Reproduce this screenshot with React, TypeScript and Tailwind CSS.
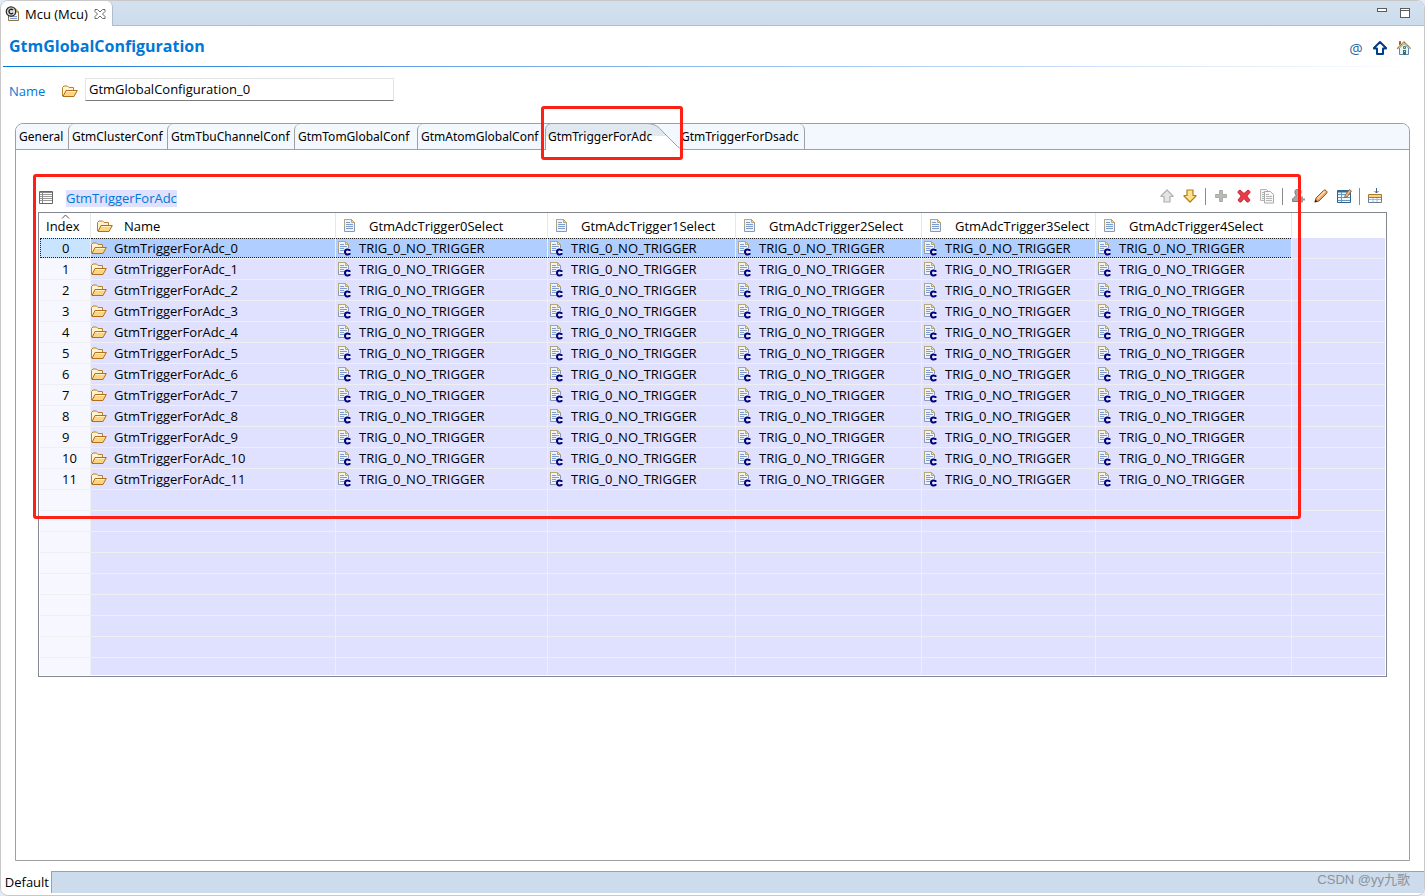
import clsx from 'clsx'
import { ReactNode } from 'react'

interface ITab {
   label: string
   width: string
}

const tabs: ITab[] = [
   { label: 'General', width: 'w-[52px]' },
   { label: 'GtmClusterConf', width: 'w-[99px]' },
   { label: 'GtmTbuChannelConf', width: 'w-[127px]' },
   { label: 'GtmTomGlobalConf', width: 'w-[123px]' },
   { label: 'GtmAtomGlobalConf', width: 'w-[128px]' },
   { label: 'GtmTriggerForAdc', width: 'w-[131px]' },
   { label: 'GtmTriggerForDsadc', width: 'w-[129px]' },
]

const activeTab = 'GtmTriggerForAdc'
const selects = [0, 1, 2, 3, 4].map((n) => `GtmAdcTrigger${n}Select`)
const rows = Array.from({ length: 12 }, (_, i) => `GtmTriggerForAdc_${i}`)
const emptyRows = Array.from({ length: 9 }, (_, i) => i)

const FolderIcon = () => (
   <svg width="16" height="14" viewBox="0 0 16 14" className="shrink-0" aria-hidden="true">
      <path d="M.5 12V3.500L2 2H5.500L7 3.500H11.500V6" fill="#fff3cf" stroke="#b9802f" />
      <path d="M1 12.500 4 6.500H15.300L12 12.500Z" fill="#fbd583" stroke="#b06f1f" strokeLinejoin="round" />
      <path d="M4.600 7.500H13.500" stroke="#fff1c4" />
   </svg>
)

const DocIcon = ({ config = false }: { config?: boolean }) => (
   <svg width="16" height="16" viewBox="-1 0 16 16" className="shrink-0" aria-hidden="true">
      <path d="M1.500 1.500H8.500L11.500 4.500V13.500H1.500Z" fill="#eef4fd" stroke="#8d97ad" />
      <path d="M1.500 9V1.500H8.500L11.500 4.500" fill="none" stroke="#b7a774" />
      <path d="M8.500 1.500V4.500H11.500Z" fill="#f2dc9c" stroke="#b7a774" />
      <path d="M3 4.500H7M3 6.500H10M3 8.500H10M3 10.500H10" stroke="#7f9dcc" />
      {config && (
         <>
            <path d="M7 8h6v7H7z" fill="#e4eafb" />
            <path
               d="M12.500 11V10C11.500 9.400 8 8.800 8 12s3.500 2.800 4.500 2V13"
               fill="none"
               stroke="#00007e"
               strokeWidth="2"
            />
         </>
      )}
   </svg>
)

const ModuleIcon = () => (
   <svg width="16" height="16" viewBox="0 0 16 16" className="shrink-0" aria-hidden="true">
      <path d="M3.500 2.500H10L13.500 6V14.500H3.500Z" fill="#f0f5ff" stroke="#8a7546" />
      <path d="M10 2.500V6H13.500Z" fill="#f0d690" stroke="#b39048" />
      <path d="M5 10.500H12M5 12.500H12" stroke="#7c9bd0" />
      <circle cx="6" cy="5.500" r="4.700" fill="#ddd" stroke="#2d2d2d" strokeWidth="1.300" />
      <path d="M8 4C6.500 2.600 4 3.300 4 5.500S6.500 8.400 8 7" fill="none" stroke="#222" strokeWidth="1.500" />
   </svg>
)

const CloseIcon = () => (
   <svg width="12" height="12" viewBox="0 0 12 12" aria-hidden="true">
      <path
         d="M1 1.500H3.500L6 4 8.500 1.500H11V3.500L8.500 6 11 8.500V10.500H8.500L6 8 3.500 10.500H1V8.500L3.500 6 1 3.500Z"
         fill="#fff"
         stroke="#6b6b6b"
      />
   </svg>
)

const HomeIcon = () => (
   <svg width="16" height="16" viewBox="0 0 16 16" aria-hidden="true">
      <path d="M3.500 1.500H4.500V5H3.500Z" fill="#c9584a" stroke="#a8543c" />
      <path d="M3.500 8 8 3.500 12.500 8V14.500H3.500Z" fill="#e9f2fb" stroke="#5f86b2" />
      <path d="M1.500 8.500 8 2 14.500 8.500" fill="none" stroke="#d9bd8b" strokeWidth="2" />
      <path d="M1 9 8 2 15 9" fill="none" stroke="#6e5a3d" strokeDasharray="1 1" />
      <path d="M7.500 6.500h2v2h-2z" fill="#e7e34b" stroke="#3b8b58" />
      <path d="M7 10h3v5H7z" fill="#2f7a62" />
      <path d="M8 11h1v1H8z" fill="#e7e34b" />
   </svg>
)

interface IArrow {
   down?: boolean
   fill: string
   stroke: string
   weight?: number
}

const ArrowIcon = ({ down = false, fill, stroke, weight = 1.2 }: IArrow) => (
   <svg width="16" height="16" viewBox="0 0 16 16" className={clsx(down && 'rotate-180')} aria-hidden="true">
      <path
         d="M8 2 14 8V8.500H11V14H5V8.500H2V8Z"
         fill={fill}
         stroke={stroke}
         strokeWidth={weight}
         strokeLinejoin="round"
      />
   </svg>
)

const PlusIcon = () => (
   <svg width="16" height="16" viewBox="0 0 16 16" aria-hidden="true">
      <path d="M6.500 2.500h3v4h4v3h-4v4h-3v-4h-4v-3h4Z" fill="#b9bbb6" stroke="#a9aca6" />
   </svg>
)

const DeleteIcon = () => (
   <svg width="16" height="16" viewBox="0 0 16 16" aria-hidden="true">
      <path
         d="M2 3.500 4 2 8 5.500 12 2 14 3.500V4.500L10.800 8 14 12 12.500 14H11L8 10.500 5 14H3.500L2 12 5.200 8 2 4.500Z"
         fill="#ea3b48"
         stroke="#c52836"
         strokeLinejoin="round"
      />
   </svg>
)

const CopyIcon = () => (
   <svg width="16" height="16" viewBox="0 0 16 16" aria-hidden="true">
      <path d="M1.500 1.500H7.500L10.500 4.500V12.500H1.500Z" fill="#f6f6f6" stroke="#b4b4b4" />
      <path d="M3 4.500H5M3 6.500H5M3 8.500H5M3 10.500H5" stroke="#b4b4b4" />
      <path d="M5.500 3.500H11.500L14.500 6.500V15H5.500Z" fill="#f8f8f8" stroke="#a8a8a8" />
      <path d="M7 6.500H10M7 8.500H13M7 10.500H13M7 12.500H13" stroke="#b4b4b4" />
   </svg>
)

const StampIcon = () => (
   <svg width="16" height="16" viewBox="0 0 16 16" aria-hidden="true">
      <path
         d="M5 2.500 6.500 1.500H9.500L11 2.500V5L9.500 7.500L11 9.500V13.500H2.500V11L4 9.500 6 7.500 5 5Z"
         fill="#a5a5a5"
         stroke="#7e7e7e"
      />
      <path d="M9 11.500h6M12 8.500v6" stroke="#9a9a9a" strokeWidth="2" />
   </svg>
)

const PencilIcon = () => (
   <svg width="16" height="16" viewBox="0 0 16 16" aria-hidden="true">
      <path d="M2 14 3 10 10.500 2.500C12 .9 15 3.400 13.700 5.200L6 13Z" fill="#f0a765" stroke="#95521f" />
      <path d="M4.500 10.500 12 3.200" stroke="#ffe0bd" strokeWidth="1.500" />
      <path d="M1.500 14.500 2.500 11.500 4.500 13.500Z" fill="#222" />
   </svg>
)

const EditTableIcon = () => (
   <svg width="16" height="16" viewBox="0 0 16 16" aria-hidden="true">
      <path d="M1.500 2.500H14.500V14.500H1.500Z" fill="#eef6fd" stroke="#30628f" />
      <path d="M2 3.500H14" stroke="#2e6c9d" strokeWidth="2" />
      <path d="M2 6.500H14M2 9.500H14M2 12.500H14M5.500 4V14" stroke="#6796bd" />
      <path d="M8.500 9.500 9.500 6.500 13.500 1.500 15.500 3 11.500 8.500Z" fill="#e9b27c" stroke="#8a5a31" strokeWidth=".8" />
   </svg>
)

const InsertIcon = () => (
   <svg width="16" height="16" viewBox="0 0 16 16" aria-hidden="true">
      <path d="M9.500 0V5M7.500 3 9.500 5 11.500 3" fill="none" stroke="#48617d" />
      <path d="M1.500 8.500H14.500V14.500H1.500Z" fill="#fff" stroke="#647d9c" />
      <path d="M2 11.500H14M6 9V14M10 9V14" stroke="#a6b8cc" />
      <path d="M1.500 6.500H14.500V9.500H1.500Z" fill="#f7d588" stroke="#a87b2c" />
   </svg>
)

const ListIcon = () => (
   <svg width="16" height="16" viewBox="0 0 16 16" className="shrink-0" aria-hidden="true">
      <path d="M1.500 1.500H14.500V13.500H1.500Z" fill="#fff" stroke="#666" />
      <path d="M2 2.500H14" stroke="#888" />
      <path d="M2 4.500H14M2 6.500H14M2 8.500H14M2 10.500H14" stroke="#999" />
      <path d="M4.500 2V13" stroke="#888" />
   </svg>
)

const ToolButton = ({ label, children }: { label: string; children: ReactNode }) => (
   <button type="button" aria-label={label} className="flex h-4 w-4 items-center justify-center">
      {children}
   </button>
)

const Separator = () => <div className="h-[17px] w-px bg-[#8c8c8c]" />

const EditorBar = () => (
   <header className="flex h-[25px] shrink-0 items-stretch justify-between border-b border-[#b4bbd0] bg-linear-to-b from-[#d3e1ef] to-[#cddcec]">
      <div className="-mb-px flex w-[112px] items-center gap-1 rounded-tr-md border-r border-[#b4bbd0] bg-white pl-1">
         <ModuleIcon />
         <span className="whitespace-nowrap">Mcu (Mcu)</span>
         <button type="button" aria-label="Close" className="ml-[2px]">
            <CloseIcon />
         </button>
      </div>
      <div className="flex items-start gap-[13px] pt-[7px] pr-[14px]">
         <button type="button" aria-label="Minimize" className="h-1 w-[10px] border border-[#5c5c5c] bg-white" />
         <button
            type="button"
            aria-label="Maximize"
            className="flex h-[10px] w-[10px] flex-col border border-[#5c5c5c] bg-white pt-px"
         >
            <span className="h-px w-full bg-[#5c5c5c]" />
         </button>
      </div>
   </header>
)

const TabStrip = () => (
   <div
      role="tablist"
      className="flex h-[26px] rounded-t-lg border-b border-[#a0a0a0] bg-[#f3f8ff] font-['Noto_Sans',sans-serif] text-xs leading-6"
   >
      {tabs.map(({ label, width }, i) => {
         const active = label === activeTab
         return (
            <button
               key={label}
               type="button"
               role="tab"
               aria-selected={active}
               className={clsx(
                  'relative h-[25px] shrink-0 text-left whitespace-nowrap',
                  width,
                  i > 0 && i < 5 && 'rounded-tl-md border-l border-[#a0a0a0]',
                  i === tabs.length - 1 && 'rounded-tr-md border-r border-[#a0a0a0] pl-[2px]',
               )}
            >
               {active && (
                  <svg width="148" height="27" viewBox="0 0 148 27" className="absolute -top-px left-0" aria-hidden="true">
                     <defs>
                        <linearGradient id="tab-fill" x1="0" y1="0" x2="0" y2="1">
                           <stop offset=".48" stopColor="#e0e8f2" />
                           <stop offset=".48" stopColor="#fff" />
                        </linearGradient>
                     </defs>
                     <path
                        d="M.5 27V7C.5 3 3 .5 7 .5H101C110 .5 114 4 118 9L130 21C133 24.500 136 26.500 141 26.500V27Z"
                        fill="url(#tab-fill)"
                     />
                     <path
                        d="M.5 27V7C.5 3 3 .5 7 .5H101C110 .5 114 4 118 9L130 21C133 24.500 136 26.500 141 26.500"
                        fill="none"
                        stroke="#a0a0a0"
                     />
                  </svg>
               )}
               <span className="relative pl-[3px]">{label}</span>
               {active && (
                  <span className="absolute -top-[18px] -left-1 z-20 h-[54px] w-[142px] rounded-[3px] border-3 border-[#ff2015]" />
               )}
            </button>
         )
      })}
   </div>
)

const SectionBar = () => (
   <div className="flex h-8 items-center justify-between pr-1">
      <div className="flex items-center gap-3 pt-1">
         <ListIcon />
         <h2 className="bg-[#e0e0ff] leading-[17px] text-[#0078d7]">GtmTriggerForAdc</h2>
      </div>
      <div className="flex items-center gap-[7px]">
         <ToolButton label="Move up">
            <ArrowIcon fill="#e4e4e4" stroke="#b0b0b0" />
         </ToolButton>
         <ToolButton label="Move down">
            <ArrowIcon down fill="#ffe48d" stroke="#b57b16" />
         </ToolButton>
         <Separator />
         <ToolButton label="Add">
            <PlusIcon />
         </ToolButton>
         <ToolButton label="Delete">
            <DeleteIcon />
         </ToolButton>
         <ToolButton label="Duplicate">
            <CopyIcon />
         </ToolButton>
         <Separator />
         <ToolButton label="Stamp">
            <StampIcon />
         </ToolButton>
         <ToolButton label="Edit">
            <PencilIcon />
         </ToolButton>
         <ToolButton label="Edit table">
            <EditTableIcon />
         </ToolButton>
         <Separator />
         <ToolButton label="Insert">
            <InsertIcon />
         </ToolButton>
      </div>
   </div>
)

const HeadCell = ({ icon, label }: { icon: ReactNode; label: string }) => (
   <th className="border-r border-[#e8e8e8] p-0 font-normal">
      <div className="flex h-[25px] items-center gap-[11px] pl-[6px]">
         {icon}
         <span className="whitespace-nowrap">{label}</span>
      </div>
   </th>
)

const BodyCell = ({ icon, label, selected }: { icon?: ReactNode; label?: string; selected?: boolean }) => (
   <td className="border-r border-b border-[#efeff2] p-0">
      <div
         className={clsx(
            'flex h-5 items-center gap-[7px] border-y border-dotted',
            selected ? 'border-[#222] bg-[#b0ceff]' : 'border-transparent',
         )}
      >
         {icon}
         <span className="whitespace-nowrap">{label}</span>
      </div>
   </td>
)

const IndexCell = ({ label, selected }: { label?: number; selected?: boolean }) => (
   <td className="border-r border-b border-[#efeff2] bg-[#f7f7ff] p-0">
      <div
         className={clsx(
            'flex h-5 items-center border-y border-l border-dotted pl-[21px]',
            selected ? 'border-[#222] bg-[#c8e4ff]' : 'border-transparent',
         )}
      >
         {label}
      </div>
   </td>
)

const TriggerTable = () => (
   <div className="h-[465px] overflow-hidden border border-[#828790] bg-white px-px pb-px">
      <div className="h-full overflow-hidden">
         <table className="w-full table-fixed border-separate border-spacing-0 text-left">
            <colgroup>
               <col className="w-[51px]" />
               <col className="w-[245px]" />
               <col className="w-[212px]" />
               <col className="w-[188px]" />
               <col className="w-[186px]" />
               <col className="w-[174px]" />
               <col className="w-[196px]" />
               <col />
            </colgroup>
            <thead>
               <tr>
                  <th className="relative border-r border-[#e8e8e8] p-0 pl-[6px] font-normal">
                     <svg width="9" height="5" viewBox="0 0 9 5" className="absolute top-px left-[21px]" aria-hidden="true">
                        <path d="M1 4.500 4.500 1 8 4.500" fill="none" stroke="#555" />
                     </svg>
                     Index
                  </th>
                  <HeadCell icon={<FolderIcon />} label="Name" />
                  {selects.map((label) => (
                     <HeadCell key={label} icon={<DocIcon />} label={label} />
                  ))}
                  <th className="p-0" />
               </tr>
            </thead>
            <tbody className="bg-[#e0e0ff]">
               {rows.map((name, i) => (
                  <tr key={name}>
                     <IndexCell label={i} selected={i === 0} />
                     <BodyCell icon={<FolderIcon />} label={name} selected={i === 0} />
                     {selects.map((label) => (
                        <BodyCell
                           key={label}
                           icon={<DocIcon config />}
                           label="TRIG_0_NO_TRIGGER"
                           selected={i === 0}
                        />
                     ))}
                     <td className="border-b border-[#efeff2] p-0" />
                  </tr>
               ))}
               {emptyRows.map((i) => (
                  <tr key={i}>
                     <IndexCell />
                     <BodyCell />
                     {selects.map((label) => (
                        <BodyCell key={label} />
                     ))}
                     <td className="border-b border-[#efeff2] p-0" />
                  </tr>
               ))}
            </tbody>
         </table>
      </div>
   </div>
)

const App: React.FC = () => {
   return (
      <div className="flex min-h-screen flex-col overflow-hidden bg-[#e4eaf8] font-['Open_Sans','Noto_Sans_CJK_SC',sans-serif] text-[13px] leading-5 text-black">
         <div className="flex flex-1 flex-col overflow-hidden rounded-lg border border-[#c8c8c8] bg-white">
            <EditorBar />
            <div className="flex h-10 items-center justify-between pr-3 pl-2">
               <h1 className="text-[16px] font-bold text-[#0078d7]">GtmGlobalConfiguration</h1>
               <div className="flex items-center gap-2 pt-1">
                  <button type="button" aria-label="Address" className="w-4 text-[15px] leading-4 text-[#2d679b]">
                     @
                  </button>
                  <ToolButton label="Up">
                     <ArrowIcon fill="#fff" stroke="#003f86" weight={2} />
                  </ToolButton>
                  <ToolButton label="Home">
                     <HomeIcon />
                  </ToolButton>
               </div>
            </div>
            <div className="ml-[2px] h-px shrink-0 bg-linear-to-r from-[#0078d7] to-white" />
            <div className="flex items-center pt-[10px] pl-2">
               <label htmlFor="config-name" className="w-[53px] pt-1 text-[#0078d7]">
                  Name
               </label>
               <div className="w-[23px] pt-1">
                  <FolderIcon />
               </div>
               <input
                  id="config-name"
                  defaultValue="GtmGlobalConfiguration_0"
                  className="h-[23px] w-[309px] border border-[#e3e3e3] border-b-[#7a7a7a] bg-white px-[3px] outline-none"
               />
            </div>
            <main className="mx-[14px] mt-[22px] mb-[10px] flex flex-1 flex-col rounded-t-lg border border-[#a0a0a0]">
               <TabStrip />
               <section className="relative px-[22px] pt-[30px]">
                  <SectionBar />
                  <TriggerTable />
                  <div className="pointer-events-none absolute top-6 left-[17px] h-[345px] w-[1268px] rounded-[3px] border-3 border-[#ff2015]" />
               </section>
            </main>
            <footer className="mb-[2px] flex h-[22px] shrink-0 items-stretch">
               <button type="button" className="w-[51px] border-r border-[#a0a0a0] bg-white pr-[2px] text-right">
                  Default
               </button>
               <div className="flex-1 border-t border-[#a0a0a0] bg-[#cddcec] pr-[14px] text-right font-['Liberation_Sans','Noto_Sans_CJK_SC',sans-serif] leading-4 text-[#8b939c]">
                  CSDN @yy九歌
               </div>
            </footer>
         </div>
      </div>
   )
}

export default App
